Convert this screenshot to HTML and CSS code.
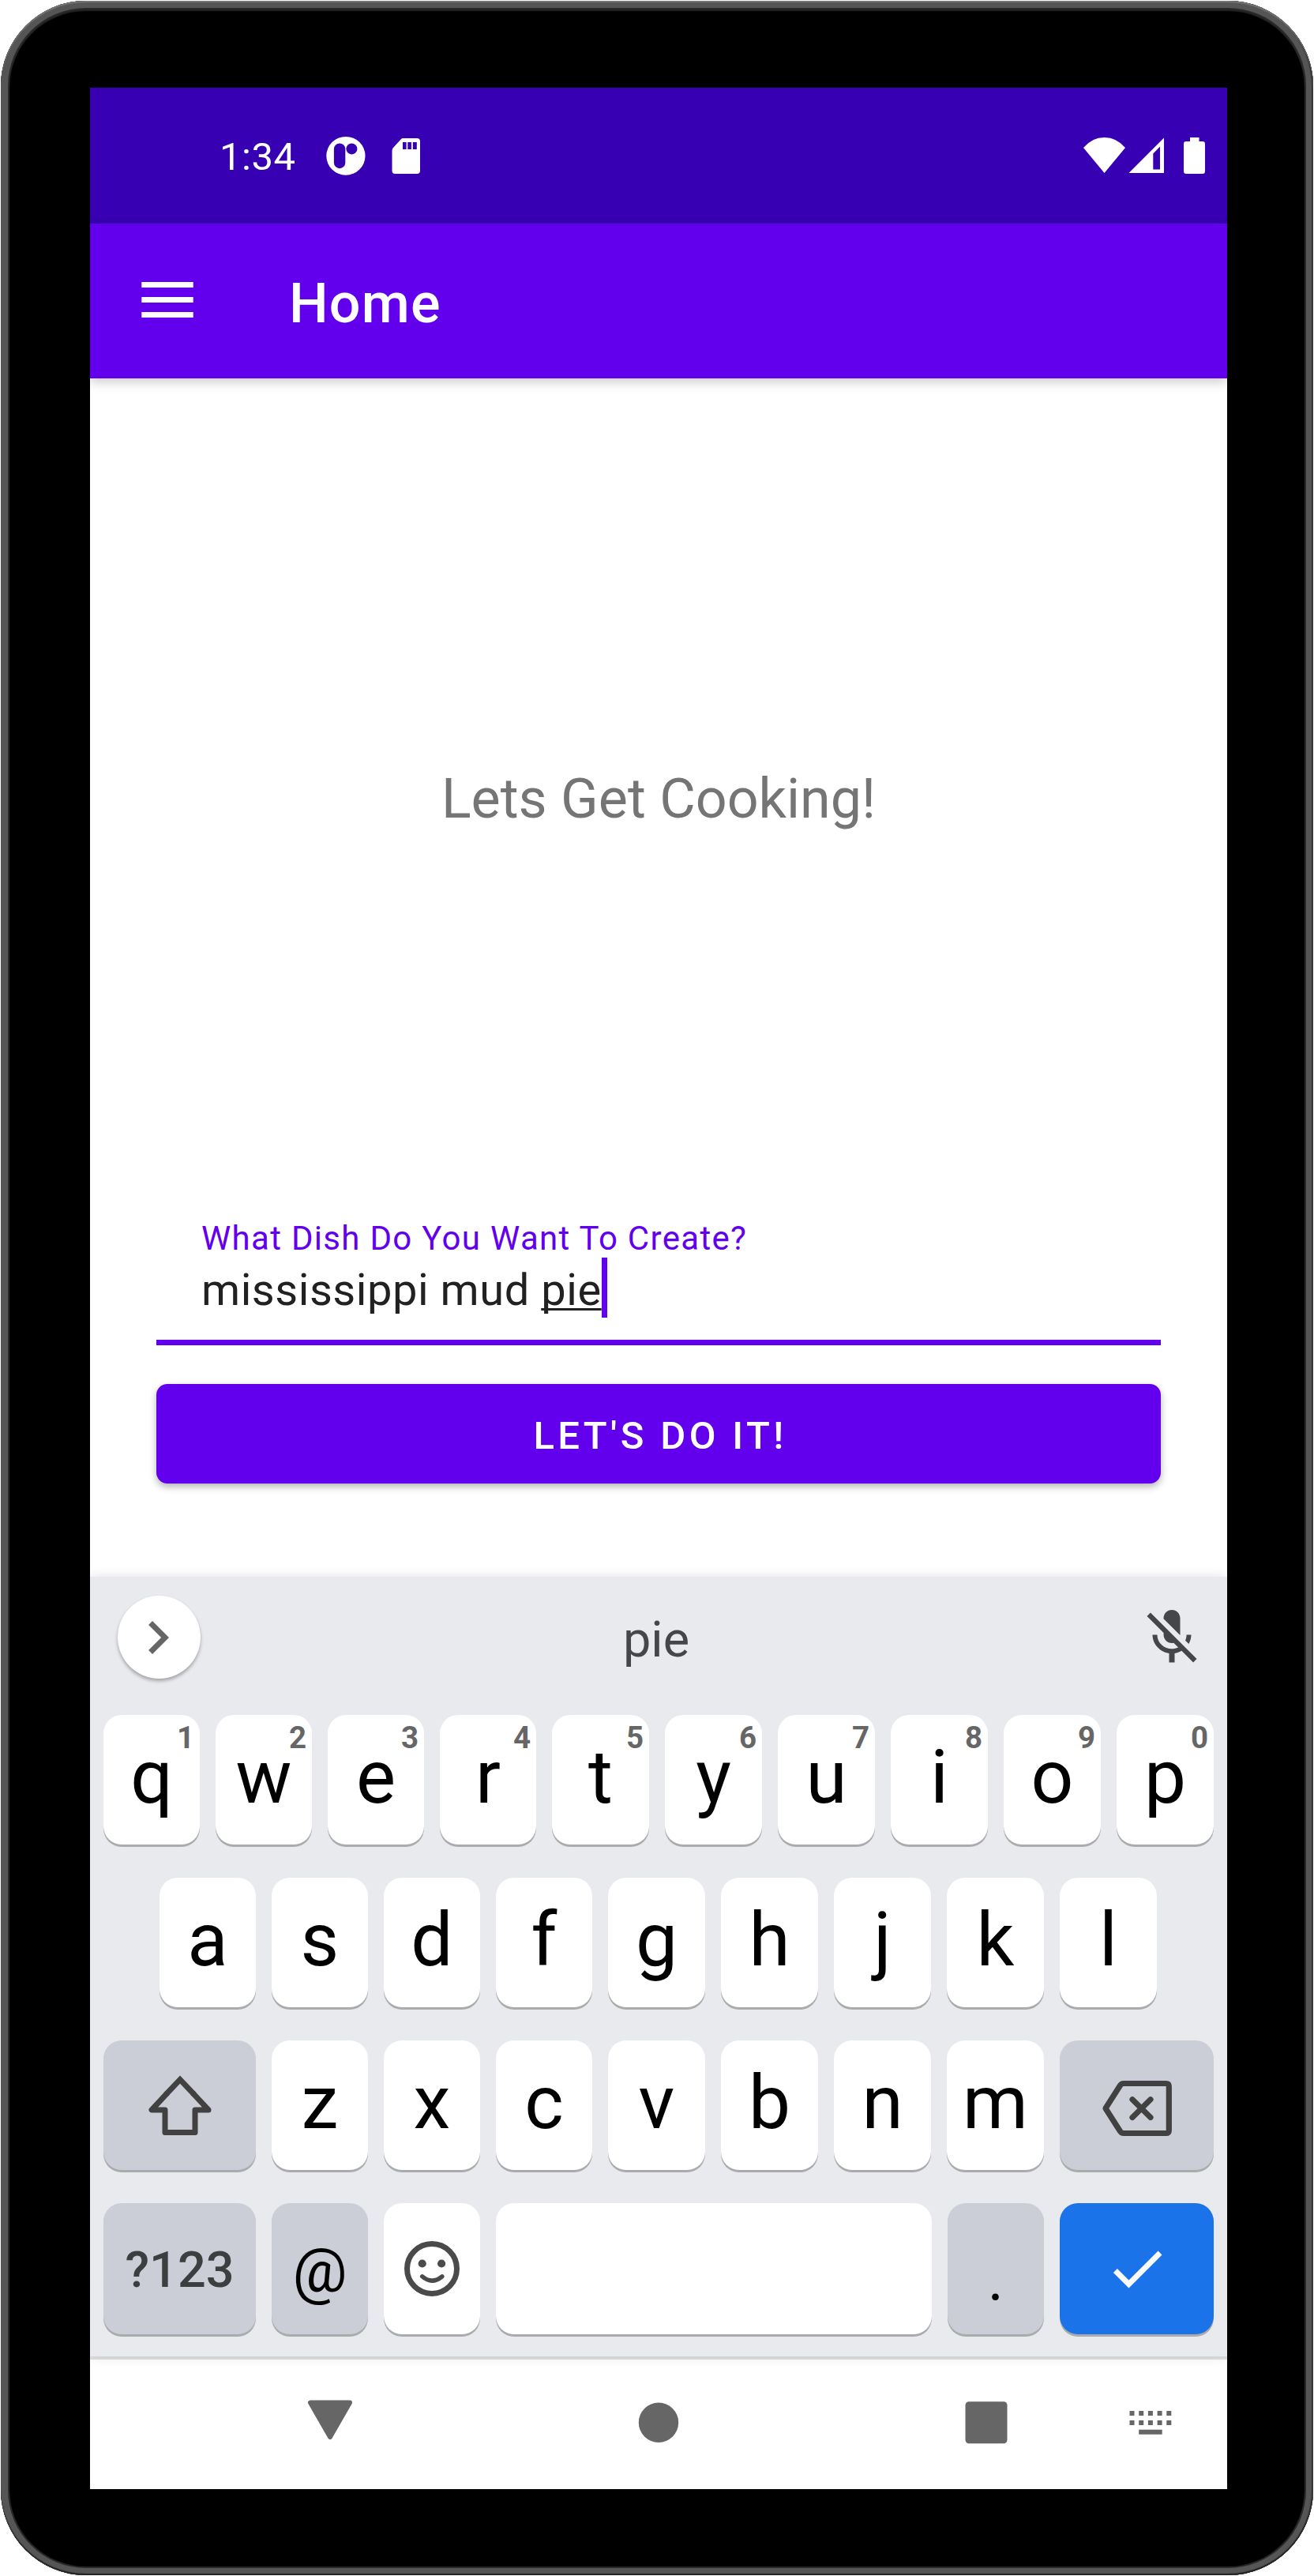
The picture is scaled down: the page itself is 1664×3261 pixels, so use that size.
FILE: index.html
```html
<!DOCTYPE html>
<html lang="en">
<head>
<meta charset="utf-8">
<title>Home</title>
<link rel="stylesheet" href="styles.css">
</head>
<body>
<div class="device">
<div class="screen">
  <header class="status">
    <span class="time">1:34</span>
    <svg class="app-logo" width="52" height="50" viewBox="411.5 172 52 50"><ellipse cx="437.4" cy="197.3" rx="24.6" ry="24.4" fill="#fff"/><rect x="422.4" y="181.4" width="14.4" height="31.8" rx="7.2" fill="#3700b3"/><circle cx="444.9" cy="188.4" r="7" fill="#3700b3"/></svg>
    <svg class="sd" width="36" height="50" viewBox="496 172 36 50"><path fill="#fff" fill-rule="evenodd" d="M509.5 175H528q4 0 4 4V216q0 4-4 4H500.500q-4 0-4-4V191q0-2 1-3.500L508 176zM510 180v9h4.600v-9zM516.300 180v9h4.600v-9zM522.800 180v9h5v-9z"/></svg>
    <span class="spacer"></span>
    <svg width="54" height="50" viewBox="1372 172 54 50"><path fill="#fff" d="M1372 187Q1383 174 1398.500 174T1425 187L1398.500 219z"/></svg>
    <svg class="signal" width="46" height="50" viewBox="1429 172 46 50"><path fill="#fff" fill-rule="evenodd" d="M1429.500 219H1474V174.500zM1460.300 194.500V214.500H1469V185.500z"/></svg>
    <svg class="battery" width="28" height="50" viewBox="1498 172 28 50"><path fill="#fff" d="M1507 174h11.500v5h4.500q3 0 3 3v35q0 3-3 3h-21q-3 0-3-3v-35q0-3 3-3h5z"/></svg>
  </header>
  <div class="appbar">
    <svg width="66" height="48" viewBox="179 357 66 48"><path fill="#fff" d="M179.300 357H244.700v7H179.300zM179.300 376H244.700v7H179.300zM179.300 395H244.700v7H179.300z"/></svg>
    <h1>Home</h1>
  </div>
  <main>
    <p class="headline">Lets Get Cooking!</p>
    <div class="field">
      <label>What Dish Do You Want To Create?</label>
      <div class="value"><span class="text">mississippi mud <span class="composing">pie</span></span><i class="cursor"></i></div>
    </div>
    <button class="submit">LET'S DO IT!</button>
  </main>
  <section class="keyboard">
    <div class="suggestions">
      <span class="more"><svg width="84" height="84" viewBox="0 0 24 24"><path fill="#666" d="M10 6L8.590 7.410 13.170 12l-4.580 4.590L10 18l6-6z"/></svg></span>
      <span class="word">pie</span>
      <svg class="mic" width="84" height="84" viewBox="0 0 24 24"><path fill="#444648" d="M19 11h-1.700c0 .74-.16 1.430-.43 2.050l1.230 1.230c.56-.98.9-2.090.9-3.280zm-4.020.17c0-.06.02-.11.02-.17V5c0-1.660-1.340-3-3-3S9 3.340 9 5v.18l5.980 5.990zM4.270 3L3 4.270l6.010 6.010V11c0 1.660 1.330 3 2.990 3 .22 0 .44-.03.65-.08l1.660 1.660c-.71.33-1.500.52-2.310.52-2.760 0-5.300-2.100-5.300-5.100H5c0 3.410 2.720 6.230 6 6.720V21h2v-3.280c.91-.13 1.770-.45 2.540-.9L19.730 21 21 19.730 4.270 3z"/></svg>
    </div>
    <div class="row">
      <span class="key slim">q<sup>1</sup></span><span class="key slim">w<sup>2</sup></span><span class="key slim">e<sup>3</sup></span><span class="key slim">r<sup>4</sup></span><span class="key">t<sup>5</sup></span><span class="key">y<sup>6</sup></span><span class="key">u<sup>7</sup></span><span class="key">i<sup>8</sup></span><span class="key">o<sup>9</sup></span><span class="key">p<sup>0</sup></span>
    </div>
    <div class="row inset">
      <span class="key slim">a</span><span class="key slim">s</span><span class="key slim">d</span><span class="key slim">f</span><span class="key">g</span><span class="key">h</span><span class="key">j</span><span class="key">k</span><span class="key">l</span>
    </div>
    <div class="row">
      <span class="key wide gray"><svg width="82" height="78" viewBox="186 2625 82 78" fill="none" stroke="#414141" stroke-width="7"><path stroke-linejoin="round" d="M211 2648.500L191 2670H208V2698.500H246V2670H263L243 2648.500"/><path stroke-miterlimit="10" d="M209 2650.500L227 2631.500L245 2650.500"/></svg></span>
      <span class="key slim">z</span><span class="key slim">x</span><span class="key slim">c</span><span class="key">v</span><span class="key">b</span><span class="key">n</span><span class="key">m</span>
      <span class="key edge gray"><svg class="backspace" width="90" height="72" viewBox="1393 2632.500 90 72" fill="none" stroke="#414141" stroke-width="7.200" stroke-linejoin="round" stroke-linecap="round"><path d="M1421 2637H1474.500q3.800 0 3.800 3.800V2696.200q0 3.800-3.800 3.800H1421q-3 0-4.500-2.500L1398 2668.500L1416.500 2639.500Q1418 2637 1421 2637zM1432 2657.200L1455 2680M1455 2657.200L1432 2680"/></svg></span>
    </div>
    <div class="row last">
      <span class="key wide gray sym">?123</span>
      <span class="key slim gray at">@</span>
      <span class="key slim"><svg width="72" height="72" viewBox="-36 -36 72 72"><g fill="none" stroke="#4a4a4a"><circle r="31.500" stroke-width="7"/><path stroke-width="5.500" stroke-linecap="round" d="M-12.300 9.800Q0 20.500 12.800 9.800"/></g><circle cx="-12.300" cy="-6.500" r="5.100" fill="#4a4a4a"/><circle cx="12.100" cy="-6.500" r="5.100" fill="#4a4a4a"/></svg></span>
      <span class="key space"></span>
      <span class="key slim gray dot">.</span>
      <span class="key edge enter"><svg width="84" height="84" viewBox="0 0 24 24"><path fill="#fff" d="M9 16.170L4.830 12l-1.420 1.410L9 19 21 7l-1.410-1.410z"/></svg></span>
    </div>
  </section>
  <nav>
    <svg width="58" height="60" viewBox="389 3037 58 60"><path fill="#666" stroke="#666" stroke-width="6" stroke-linejoin="round" d="M393 3041.500H443L418 3085z"/></svg>
    <svg class="home" width="54" height="60" viewBox="807 3037 54 60"><circle cx="834" cy="3066.700" r="25.200" fill="#666"/></svg>
    <svg class="recent" width="54" height="60" viewBox="1222 3037 54 60"><rect x="1222.500" y="3040.300" width="53" height="53" rx="4.500" fill="#666"/></svg>
    <svg class="ime" width="54" height="60" viewBox="1430 3037 54 60"><path fill="#666" d="M1430.500 3052h6v6h-6zm11.700 0h6v6h-6zm11.700 0h6v6h-6zm11.700 0h6v6h-6zm11.700 0h6v6h-6zM1430.500 3064h6v6h-6zm11.700 0h6v6h-6zm11.700 0h6v6h-6zm11.700 0h6v6h-6zm11.700 0h6v6h-6zM1442.200 3075.700h29.500v6h-29.500z"/></svg>
  </nav>
</div>
</div>
</body>
</html>
```
FILE: styles.css
```css
* { box-sizing: border-box; }
body { margin: 0; padding: 1px; background: #fff; font-family: Roboto, sans-serif; }
svg { display: block; flex: none; }
.device {
  width: 1662px;
  height: 3259px;
  padding: 110px 0 0 113px;
  background: #000;
  border-radius: 108px;
  box-shadow: inset 0 2px 1px #777, inset 0 -2px 1px #222, inset -2px 0 1px #333, inset 0 0 0 9px #555, inset 0 0 1px 11px #2a2a2a, inset 0 2px 1px 11px #222;
}
.screen {
  display: flex;
  flex-direction: column;
  width: 1440px;
  height: 3040px;
  overflow: hidden;
  background: #fff;
}
.status {
  display: flex;
  align-items: center;
  height: 172px;
  padding: 0 28px 0 164px;
  background: #3700b3;
}
.time { width: 99px; padding-top: 4px; color: #fff; font-size: 49px; line-height: 58px; letter-spacing: .5px; }
.app-logo { margin-left: 34.5px; }
.sd { margin-left: 32.5px; }
.spacer { flex: 1; }
.signal { margin-left: 3px; }
.battery { margin-left: 23px; }
.appbar {
  position: relative;
  display: flex;
  align-items: center;
  height: 196px;
  padding-left: 65px;
  background: #6200ee;
  box-shadow: 0 4px 14px rgba(0, 0, 0, .22);
}
h1 { margin: 0 0 0 121px; padding-top: 6px; color: #fff; font-size: 70px; font-weight: 500; line-height: 82px; letter-spacing: 1.2px; }
main { display: flex; flex-direction: column; height: 1517px; padding: 491px 84px 0; }
.headline { margin: 0; color: #757575; font-size: 70px; line-height: 82px; text-align: center; white-space: nowrap; }
.field { display: flex; flex-direction: column; height: 160px; margin-top: 491px; padding-left: 57px; border-bottom: 7px solid #6200ee; }
.field label { color: #6200ee; font-size: 42px; line-height: 50px; letter-spacing: 1.31px; white-space: nowrap; }
.value { display: flex; height: 76px; margin-top: -1px; color: #212121; font-size: 56px; }
.text { padding-top: 6px; line-height: 70px; white-space: nowrap; letter-spacing: .55px; }
.composing { text-decoration: underline 3px; text-underline-offset: 4px; text-decoration-skip-ink: none; }
.cursor { width: 7px; height: 76px; background: #6200ee; }
.submit {
  height: 126px;
  margin-top: 49px;
  padding: 4px 0 0 4px;
  border: 0;
  border-radius: 14px;
  background: #6200ee;
  color: #fff;
  font: 500 49px Roboto, sans-serif;
  letter-spacing: 4.375px;
  box-shadow: 0 4px 10px rgba(0, 0, 0, .3);
}
.keyboard { position: relative; height: 987px; padding: 0 17px; background: #e8eaed; box-shadow: 0 0 14px rgba(0, 0, 0, .12); }
.suggestions { display: flex; align-items: center; justify-content: space-between; height: 153px; padding: 0 11px 0 18px; margin-bottom: 22px; }
.more { display: flex; align-items: center; justify-content: center; width: 105px; height: 105px; padding-right: 3px; border-radius: 50%; background: #fff; box-shadow: 0 3px 4px rgba(0, 0, 0, .3); }
.word { padding-top: 6px; margin-left: -34px; color: #444648; font-size: 63px; line-height: 74px; }
.row { display: flex; gap: 20px; height: 164px; margin-bottom: 42px; }
.inset { padding-left: 71px; }
.last { height: 166px; margin: 0; }
.key {
  position: relative;
  display: flex;
  align-items: center;
  justify-content: center;
  flex: 0 0 123px;
  padding-bottom: 6px;
  border-radius: 23px;
  background: #fff;
  box-shadow: 0 3px 0 #a9abad;
  color: #000;
  font-size: 94.5px;
  line-height: 110px;
}
.key:has(svg) { padding: 0; }
.key sup { position: absolute; top: 6px; right: 7px; color: #666; font-size: 38.5px; font-weight: 700; line-height: 46px; }
.gray { background: #cbced7; }
.slim { flex-basis: 122px; }
.wide { flex-basis: 193px; }
.edge { flex-basis: 195px; }
.backspace { margin-top: 7px; }
.sym { padding: 3px 0 0; color: #3c3e40; font-size: 63px; font-weight: 500; }
.at { padding: 6px 0 0; font-size: 77px; }
.dot { padding: 28px 0 0; font-size: 77px; }
.space { flex: 1; }
.enter { background: #1a73e8; }
nav { display: flex; align-items: center; height: 168px; padding: 0 70px 4px 275px; border-top: 4px solid #e0e0e0; background: #fff; }
.home { margin-left: 360px; }
.recent { margin-left: 361px; }
.ime { margin-left: 154px; }
```
